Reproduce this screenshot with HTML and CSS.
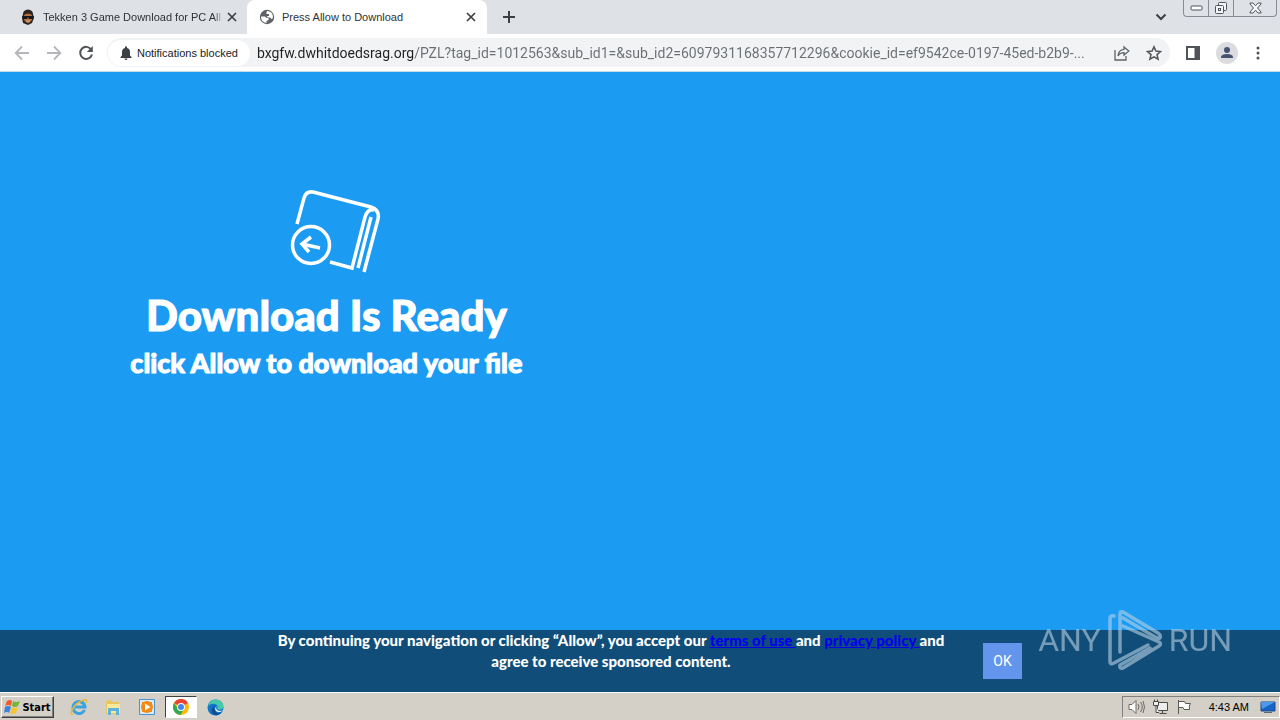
FILE: index.html
```html
<!DOCTYPE html>
<html lang="en">
<head>
    <meta charset="UTF-8">
    <meta name="viewport" content="width=device-width, initial-scale=1.0">
    <title>Press Allow to Download</title>
    <link rel="stylesheet" href="styles.css">
</head>
<body>
    <header class="tab-strip">
        <div class="tab">
            <svg class="favicon" width="16" height="16" viewBox="0 0 16 16">
                <path d="M3 5Q3 1 8 .5 13 1 13 5l1 4-2 5-4 2-5-2-1-5z" fill="#2b2320"/>
                <path d="M4 6q4-3 8 0v5l-3 3H7l-3-3z" fill="#b5713d"/>
                <path d="M2 7h12l-1 3H9L8 8 7 10H3z" fill="#18181a"/>
                <path d="M6 12h4" stroke="#e4b28a"/>
            </svg>
            <span class="tab-title fade">Tekken 3 Game Download for PC All</span>
            <button class="icon-button close" aria-label="Close tab">
                <svg width="10" height="10" viewBox="0 0 10 10"><path d="M1 1l8 8M9 1L1 9" stroke="#3c4043" stroke-width="1.7"/></svg>
            </button>
        </div>
        <div class="tab active">
            <svg class="favicon" width="16" height="16" viewBox="0 0 16 16">
                <circle cx="8" cy="8" r="7.2" fill="#5f6368"/>
                <path d="M2 7.500h4l1.500 1.500h2v2l-2 1v2Q2 13 2 7.500zM8 2q4 0 5.600 3.500L14 9l-1.500 1-1.400-1.500H8.500L8 7h2V5H7.500V3.500z" fill="#fff"/>
            </svg>
            <span class="tab-title">Press Allow to Download</span>
            <button class="icon-button close" aria-label="Close tab">
                <svg width="10" height="10" viewBox="0 0 10 10"><path d="M1 1l8 8M9 1L1 9" stroke="#3c4043" stroke-width="1.7"/></svg>
            </button>
        </div>
        <button class="icon-button new-tab" aria-label="New tab">
            <svg width="12" height="12" viewBox="0 0 12 12"><path d="M6 0v12M0 6h12" stroke="#3c4043" stroke-width="2"/></svg>
        </button>
        <button class="icon-button tab-search" aria-label="Search tabs">
            <svg width="12" height="8" viewBox="0 0 12 8"><path d="M1.500 1.500L6 6l4.500-4.500" fill="none" stroke="#3c4043" stroke-width="2"/></svg>
        </button>
        <div class="window-controls">
            <button aria-label="Minimize"><svg width="13" height="6" viewBox="0 0 13 6"><rect x="1" y="1" width="11" height="4" rx="1" fill="#fff" stroke="#51545c"/></svg></button>
            <button aria-label="Restore"><svg width="14" height="14" viewBox="0 0 14 14" fill="#f4f5f7" stroke="#51545c"><rect x="4.500" y="1.500" width="8" height="8" rx="1"/><rect x="1.500" y="4.500" width="8" height="8" rx="1"/><rect x="4.500" y="7.500" width="2" height="2"/></svg></button>
            <button class="wide" aria-label="Close"><svg width="13" height="12" viewBox="0 0 13 12"><path d="M1 1h3l2.500 2.800L9 1h3v1L8.500 6l3.500 4v1H9L6.500 8.200 4 11H1v-1l3.500-4L1 2z" fill="#f8f8fa" stroke="#51545c"/></svg></button>
        </div>
    </header>

    <nav class="toolbar">
        <button class="icon-button" aria-label="Back">
            <svg width="16" height="16" viewBox="0 0 16 16"><path d="M15 8H2M8 1.500L1.700 8 8 14.500" fill="none" stroke="#b5b7ba" stroke-width="1.800"/></svg>
        </button>
        <button class="icon-button" aria-label="Forward">
            <svg width="16" height="16" viewBox="0 0 16 16"><path d="M1 8h13M8 1.500L14.300 8 8 14.500" fill="none" stroke="#b5b7ba" stroke-width="1.800"/></svg>
        </button>
        <button class="icon-button" aria-label="Reload">
            <svg width="16" height="16" viewBox="0 0 16 16"><path d="M13.200 4.500A6 6 0 1 0 14 9.500" fill="none" stroke="#505357" stroke-width="2"/><path d="M14.800 1v6H8.800z" fill="#505357"/></svg>
        </button>
        <div class="address-bar">
            <button class="permission-chip">
                <svg width="12" height="14" viewBox="0 0 12 14"><path d="M5 2V1.200a1 1 0 0 1 2 0V2q3 .8 3 4v3.500l1.500 1.500v1H.5v-1L2 9.500V6q0-3.200 3-4zM4.500 12.500h3Q7.300 14 6 14t-1.500-1.500z" fill="#3c4043"/></svg>
                Notifications blocked
            </button>
            <input class="url" type="text" aria-label="Address" value="bxgfw.dwhitdoedsrag.org/PZL?tag_id=1012563&amp;sub_id1=&amp;sub_id2=6097931168357712296&amp;cookie_id=ef9542ce-0197-45ed-b2b9-...">
            <button class="icon-button" aria-label="Share">
                <svg width="16" height="16" viewBox="0 0 16 16" fill="none" stroke="#5f6368" stroke-width="1.300"><path d="M1 5v10h11v-4"/><path d="M10 2l4.800 4L10 10V7.700q-4 0-6 3.300.4-6 6-6.700z"/></svg>
            </button>
            <button class="icon-button" aria-label="Bookmark this tab">
                <svg width="16" height="16" viewBox="0 0 16 16"><path d="M8 1.800l1.900 4.300 4.600.4-3.500 3.100 1.100 4.600L8 11.800l-4.100 2.400L5 9.600 1.500 6.500l4.600-.4z" fill="none" stroke="#505357" stroke-width="1.500"/></svg>
            </button>
        </div>
        <button class="icon-button" aria-label="Side panel">
            <svg width="14" height="14" viewBox="0 0 14 14"><path d="M1 1h12v12H1z" fill="none" stroke="#505357" stroke-width="2"/><path d="M8.500 1H13v12H8.500z" fill="#505357"/></svg>
        </button>
        <button class="icon-button" aria-label="Profile">
            <svg width="22" height="22" viewBox="0 0 22 22"><circle cx="11" cy="11" r="11" fill="#dadce0"/><circle cx="11" cy="8" r="3" fill="#465270"/><path d="M5 16v-1.500Q6 12 11 12t6 2.500V16z" fill="#465270"/></svg>
        </button>
        <button class="icon-button menu" aria-label="Menu">
            <svg width="4" height="14" viewBox="0 0 4 14" fill="#505357"><circle cx="2" cy="2" r="1.500"/><circle cx="2" cy="7" r="1.500"/><circle cx="2" cy="12" r="1.500"/></svg>
        </button>
    </nav>

    <main class="page">
        <section class="hero">
            <svg class="book" width="94" height="86" viewBox="0 0 94 86" fill="none" stroke="#fff" stroke-width="4">
                <path d="M8 36L15 10Q17 3 24 4l58 15q9 3 7 12L75 84" stroke-width="3.500"/>
                <path d="M41 74l22 6L76 29q3-9 9-7M69 80l13-51" stroke-width="3.500"/>
                <circle cx="22" cy="57" r="18.500" stroke-width="3.500"/>
                <path d="M31 60L13 56M22 49l-9 7 7 8" stroke-width="3.500"/>
            </svg>
            <h1>Download Is Ready</h1>
            <h2>click Allow to download your file</h2>
        </section>
        <footer class="consent">
            <p>By continuing your navigation or clicking “Allow”, you accept our <a href="#">terms of use </a>and <a href="#">privacy policy </a>and agree to receive sponsored content.</p>
            <button class="ok">OK</button>
        </footer>
        <div class="watermark">
            <span>ANY</span>
            <svg width="58" height="64" viewBox="0 0 58 64" fill="none" stroke="currentColor" stroke-width="3.500" stroke-linejoin="round" stroke-linecap="round">
                <path d="M8 8Q4 7 4 11v43q0 3 4 1l34-18"/>
                <path d="M14 44V6q0-3 3-2l35 21q3 2 2 5-2 1-5-1L17 10"/>
                <path d="M17 18l36 16q3 2 0 4L17 60q-4 1-3-3l30-17"/>
            </svg>
            <span>RUN</span>
        </div>
    </main>

    <div class="taskbar">
        <button class="start">
            <svg width="17" height="16" viewBox="0 0 17 16"><path d="M3 2q3-2 5 0L7 7Q4 5 1 7z" fill="#ef5b2b"/><path d="M9 2q3 2 7 0l-2 5q-3 2-6 0z" fill="#72b83b"/><path d="M1 8q3-2 6 0l-2 6q-2-2-5 0z" fill="#3c83dc"/><path d="M8 8q3 2 6 0l-2 6q-3 2-6 0z" fill="#f8c432"/></svg>
            Start
        </button>
        <button class="task" aria-label="Internet Explorer">
            <svg width="18" height="18" viewBox="0 0 18 18" fill="none"><path d="M14.500 12A6 6 0 1 1 15 9H5" stroke="#39a2df" stroke-width="3"/><path d="M3 16Q0 17 2 12 6 4 14 2q4-1 2 3" stroke="#eab935" stroke-width="1.500"/></svg>
        </button>
        <button class="task" aria-label="File Explorer">
            <svg width="18" height="18" viewBox="0 0 18 18"><path d="M2 3l5-1 1 2h7v12H2z" fill="#e9c659"/><path d="M3 6h13v9H3z" fill="#f8e79c"/><path d="M4 10h11v7h-3v-4H7v4H4z" fill="#5eb3dc"/></svg>
        </button>
        <button class="task" aria-label="Media Player">
            <svg width="16" height="16" viewBox="0 0 16 16"><path d="M.5.5h15v15H.5z" fill="#d9ebf8" stroke="#4c94cf"/><path d="M3 3h10v10H3z" fill="#f18a16"/><circle cx="8" cy="8" r="6" fill="#f18a16"/><path d="M6 4.500L11.500 8 6 11.500z" fill="#fff"/></svg>
        </button>
        <button class="task current" aria-label="Chrome">
            <svg width="16" height="16" viewBox="0 0 16 16"><circle cx="8" cy="8" r="8" fill="#fbbc05"/><path d="M8 8L1 4a8 8 0 0 1 14 0z" fill="#ea4335"/><path d="M1 4a8 8 0 0 0 6.500 12L11 10 5 10z" fill="#34a853"/><circle cx="8" cy="8" r="4" fill="#fff"/><circle cx="8" cy="8" r="3" fill="#4285f4"/></svg>
        </button>
        <button class="task" aria-label="Edge">
            <svg width="17" height="17" viewBox="0 0 17 17"><circle cx="8.500" cy="8.500" r="8" fill="#1475c9"/><path d="M1 7Q3 0 9 .5q8 1 7.500 7.500Q15 12 10 10q2-4-2-5Q4 4 1 7z" fill="#45c9a8"/><path d="M9 6q-4 4 1 8 3 1 5-1-4 5-9 2-4-5 3-9z" fill="#124b8f"/><path d="M10 7q-2 2 0 4 3 2 6 0l-1 1q-3 2-6 0-2-3 1-5z" fill="#fff"/></svg>
        </button>
        <div class="tray">
            <svg width="17" height="16" viewBox="0 0 17 16" fill="#fff" stroke="#6c6a66"><path d="M1 5.500h3l4-4v13l-4-4H1z"/><path d="M10 5q2 3 0 6M12.500 3q3.500 5 0 10M15 2q3 6 0 12" fill="none"/></svg>
            <svg width="17" height="16" viewBox="0 0 17 16" fill="#eee" stroke="#4e4c49"><path d="M5.500 3.500h10v8h-10zM7.500 14.500h7M10.500 12v2"/><path d="M1.500 2.500h5v4h-5zM2.500.5v2M5.500.5v2M4 7v6.500h3"/></svg>
            <svg width="17" height="16" viewBox="0 0 17 16" fill="#fff" stroke="#5c5a56"><path d="M2.500 1v14M2.500 2.500h6l1 2h5q-2 2-1 6H8l-1-2H2.500z"/></svg>
            <time>4:43 AM</time>
            <svg width="16" height="14" viewBox="0 0 16 14"><path d="M1 2h14v9H1z" fill="#1764c5" stroke="#224987"/><path d="M1 2h14L2 9z" fill="#4b9bea"/><path d="M4 12.500h8" stroke="#5c6779"/></svg>
        </div>
    </div>
</body>
</html>
```

FILE: styles.css
```css
* {
    box-sizing: border-box;
}
body {
    display: flex;
    flex-direction: column;
    min-height: 100vh;
    margin: 0;
    font-family: "Liberation Sans", Arial, sans-serif;
    font-size: 11px;
    color: #303236;
}
button {
    display: flex;
    align-items: center;
    justify-content: center;
    padding: 0;
    border: 0;
    background: none;
    font: inherit;
    color: inherit;
    white-space: nowrap;
}
svg {
    flex: none;
}

/* browser tabs */
.tab-strip {
    display: flex;
    align-items: center;
    height: 34px;
    background: #dee1e6;
}
.tab {
    display: flex;
    align-items: center;
    width: 247px;
    height: 34px;
    padding: 0 9px 0 20px;
}
.tab.active {
    width: 240px;
    padding: 0 10px 0 12px;
    border-radius: 8px 8px 0 0;
    background: #fff;
}
.tab-title {
    flex: 1;
    min-width: 0;
    margin: 0 3px 0 7px;
    overflow: hidden;
    white-space: nowrap;
}
.fade {
    mask-image: linear-gradient(to right, #000 95%, transparent);
}
.close {
    width: 12px;
}
.new-tab {
    width: 44px;
}
.tab-search {
    margin-left: auto;
    margin-right: 16px;
}
.window-controls {
    display: flex;
    align-self: flex-start;
    height: 17px;
    margin-right: 3px;
    border: 1px solid #898c93;
    border-top: 0;
    border-radius: 0 0 4px 4px;
}
.window-controls button {
    width: 25px;
    border-right: 1px solid #898c93;
}
.window-controls .wide {
    width: 42px;
    border-right: 0;
}

/* toolbar */
.toolbar {
    display: flex;
    align-items: center;
    gap: 16px;
    height: 38px;
    padding: 0 20px 0 14px;
    border-bottom: 1px solid #c5dcea;
    background: #fff;
}
.address-bar {
    display: flex;
    flex: 1;
    align-items: center;
    gap: 16px;
    height: 29px;
    margin-left: -3px;
    padding: 0 8px 0 1px;
    border-radius: 14px;
    background: #f1f3f4;
}
.permission-chip {
    gap: 5px;
    height: 26px;
    padding: 0 12px;
    border-radius: 13px;
    background: #fff;
    color: #202124;
}
.url {
    flex: 1;
    min-width: 0;
    margin-left: -9px;
    padding: 0;
    border: 0;
    outline: 0;
    background: linear-gradient(to right, #202124 158px, #6b6e72 158px);
    background-clip: text;
    font: 14px Roboto, sans-serif;
    color: transparent;
}
.menu {
    margin-left: 2px;
}

/* page content */
.page {
    position: relative;
    display: flex;
    flex: 1;
    flex-direction: column;
    background: #1c9bf3;
    font-family: Lato, sans-serif;
}
.hero {
    display: flex;
    flex: 1;
    flex-direction: column;
    align-items: center;
    width: 51%;
    padding-top: 116px;
    color: #fff;
}
.book {
    margin-left: 20px;
}
h1, h2 {
    margin: 0;
    font-weight: 900;
    -webkit-text-stroke: 1px #fff;
}
h1 {
    margin-top: 15px;
    font-size: 42px;
    line-height: 52px;
}
h2 {
    margin-top: 4px;
    font-size: 27px;
    line-height: 36px;
}
.consent {
    display: flex;
    justify-content: center;
    gap: 22px;
    min-height: 62px;
    padding-left: 3px;
    background: #104e79;
}
.consent p {
    width: 700px;
    margin: 0;
    font-size: 15px;
    font-weight: 900;
    line-height: 21px;
    text-align: center;
    color: #fff;
}
.consent a {
    color: #0000ee;
}
.ok {
    width: 39px;
    height: 36px;
    margin-top: 13px;
    background: #6495ed;
    font: 14px Roboto, sans-serif;
    color: #fff;
}

/* logo laid over the page corner */
.watermark {
    position: absolute;
    right: 48px;
    bottom: 20px;
    display: flex;
    align-items: center;
    gap: 5px;
    font: 32px Roboto, sans-serif;
    color: #b9d2e4;
    opacity: 0.6;
}

/* taskbar */
.taskbar {
    display: flex;
    align-items: center;
    height: 28px;
    padding: 1px 0 0 1px;
    border-top: 1px solid #fff;
    background: #d4d0c8;
}
.start {
    gap: 1px;
    width: 53px;
    height: 22px;
    margin-right: 9px;
    border: 1px solid;
    border-color: #fff #404040 #404040 #fff;
    box-shadow: inset -1px -1px #808080;
    font: bold 11px "DejaVu Sans Condensed", sans-serif;
    color: #000;
}
.task {
    width: 32px;
    height: 22px;
    margin-right: 2px;
}
.task.current {
    border: 1px solid;
    border-color: #404040 #fff #fff #404040;
    background: #fff;
}
.tray {
    display: flex;
    align-items: center;
    gap: 7px;
    height: 22px;
    margin-left: auto;
    padding: 0 3px 0 5px;
    border: 1px solid;
    border-color: #808080 #fff #fff #808080;
    color: #000;
}
.tray time {
    margin: 0 4px 0 9px;
}
```
